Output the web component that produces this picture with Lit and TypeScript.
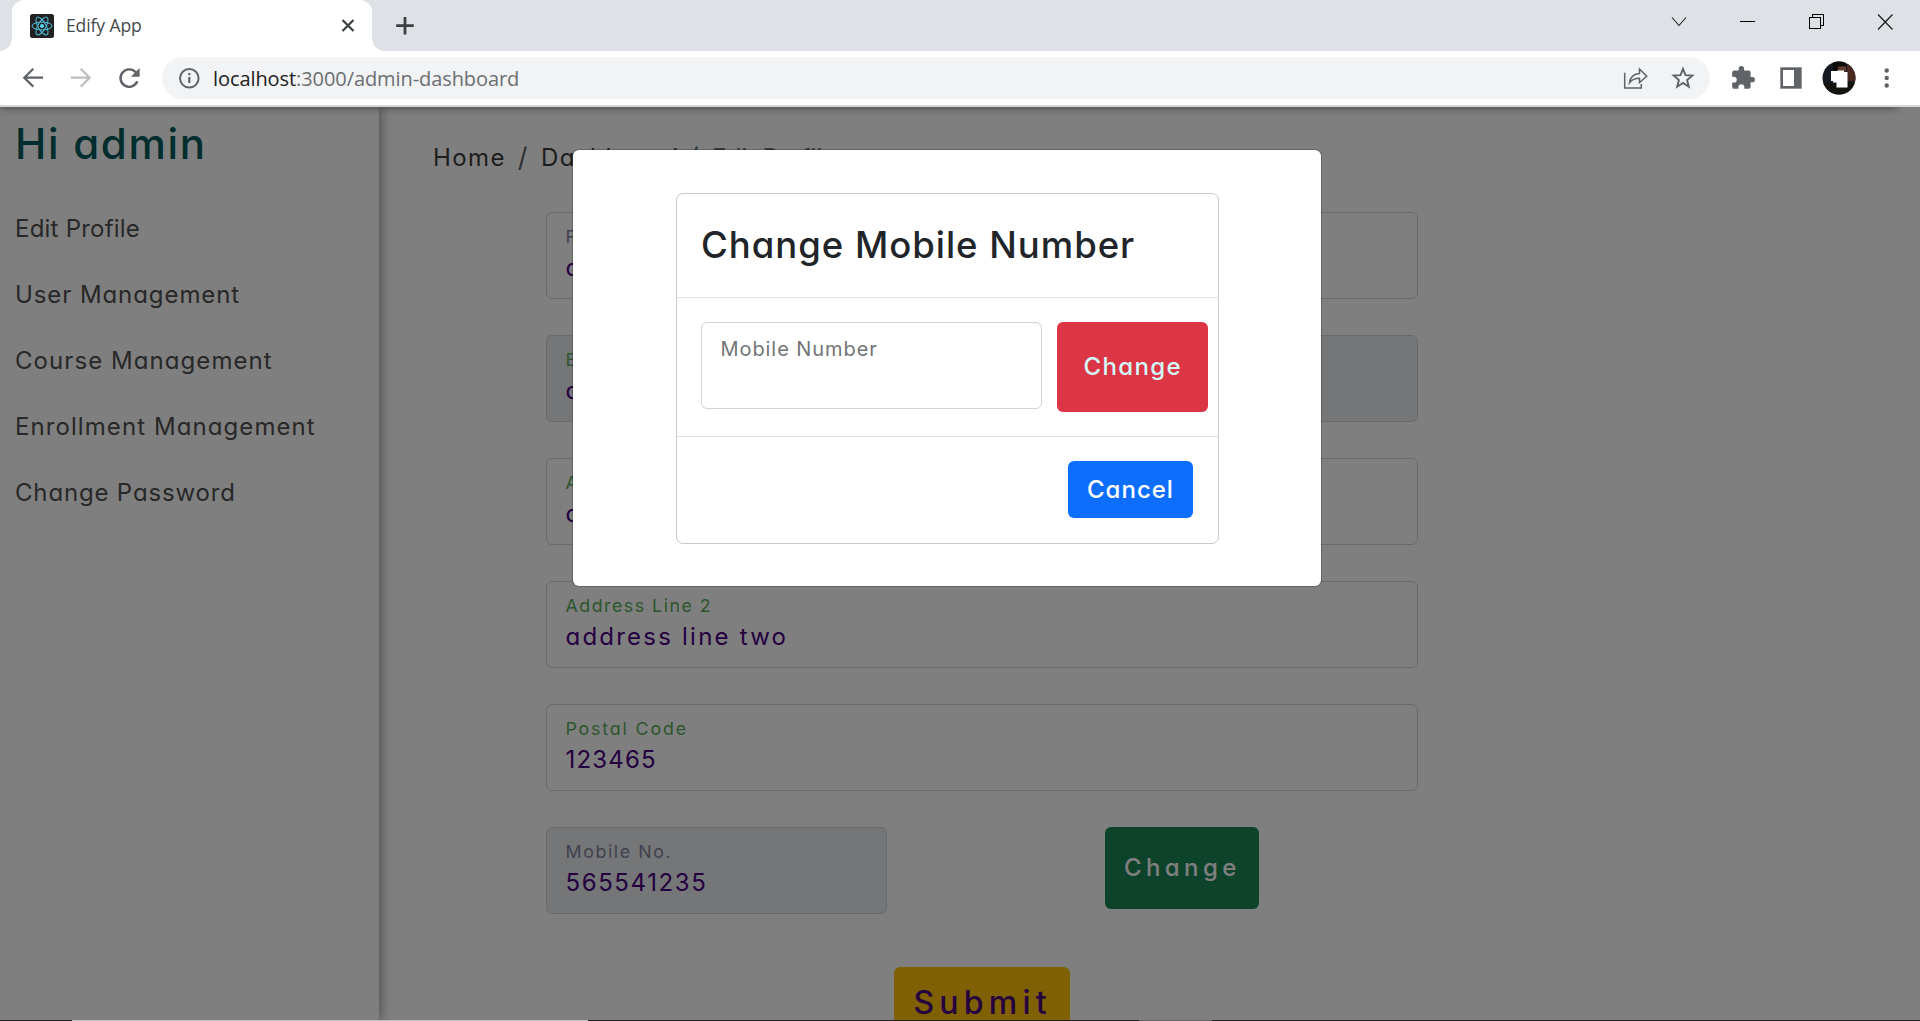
import { LitElement, html, css } from "lit";
import { customElement } from "lit/decorators.js";

const spaced = (text: string, ls: number) =>
  html`<span style="letter-spacing:${ls}px">${text}</span>`;

@customElement("browser-chrome")
class BrowserChrome extends LitElement {
  static styles = css`
    :host { display: block; height: 107px; box-sizing: border-box; background: #fff; border-bottom: 2px solid #d6d7d8; font-family: "Open Sans", "Noto Sans", sans-serif; }
    svg { display: block; flex: none; }
    .strip { display: flex; height: 51px; background: #dee1e6; padding-left: 12px; }
    .tab { position: relative; width: 360px; box-sizing: border-box; background: #fff; border-radius: 12px 12px 0 0; display: flex; align-items: center; padding: 1px 12px 0 18px; }
    .tab::before, .tab::after { content: ""; position: absolute; bottom: 0; width: 12px; height: 12px; }
    .tab::before { left: -12px; background: radial-gradient(circle at 0 0, #dee1e6 11.5px, #fff 12px); }
    .tab::after { right: -12px; background: radial-gradient(circle at 100% 0, #dee1e6 11.5px, #fff 12px); }
    .title { flex: 1; margin-left: 12px; padding-bottom: 2px; font-size: 17.5px; line-height: 24px; letter-spacing: -0.1px; color: #45494d; }
    .plus { margin: 14px 0 0 21px; }
    .win { display: flex; margin-left: auto; height: 43px; align-items: center; }
    .win svg { width: 69px; }
    .bar { display: flex; height: 54px; align-items: center; padding-left: 21px; }
    .nav { display: flex; gap: 24px; }
    .omni { width: 1548px; height: 42px; margin-left: 21px; box-sizing: border-box; border-radius: 21px; background: #f1f3f4; display: flex; align-items: center; padding: 0 3px 0 15px; }
    .url { flex: 1; margin-left: 11px; padding-top: 1px; font-size: 20px; line-height: 30px; letter-spacing: -0.08px; color: #6b6f73; }
    .host { color: #202124; }
    .cell { width: 48px; display: flex; justify-content: center; }
    .tools { display: flex; margin-left: 9px; align-items: center; }
  `;
  render() {
    return html`
      <div class="strip">
        <div class="tab">
          <svg width="24" height="24" viewBox="0 0 24 24" fill="none" stroke="#53c1de">
            <rect width="24" height="24" rx="2.5" fill="#222" stroke="none" />
            <ellipse cx="12" cy="12" rx="10" ry="3.9" />
            <ellipse cx="12" cy="12" rx="10" ry="3.9" transform="rotate(60 12 12)" />
            <ellipse cx="12" cy="12" rx="10" ry="3.9" transform="rotate(120 12 12)" />
            <circle cx="12" cy="12" r="2" fill="#61dafb" stroke="none" />
          </svg>
          <span class="title">Edify App</span>
          <svg width="24" height="24" viewBox="0 0 24 24"><path d="M6.500 6l11 11M17.500 6l-11 11" stroke="#3c4043" stroke-width="2.2" /></svg>
        </div>
        <svg class="plus" width="24" height="24" viewBox="0 0 24 24"><path d="M12 3v17.500M3.200 11.700h17.600" stroke="#3c4043" stroke-width="2.8" /></svg>
        <div class="win">
          <svg height="16" viewBox="0 0 69 16" fill="none" stroke="#222" stroke-width="1.1"><path d="M28 3.500l7 8 7-8" /></svg>
          <svg height="16" viewBox="0 0 69 16"><path d="M27 7.500h15" stroke="#000" /></svg>
          <svg height="17" viewBox="0 0 69 17" fill="none" stroke="#000" shape-rendering="crispEdges"><path d="M27.500 4.500h11v11h-11zM30.500 4.500v-3h11v11h-3" /></svg>
          <svg height="16" viewBox="0 0 69 16"><path d="M27 .5l14.500 15M41.500 .5l-14.500 15" stroke="#111" stroke-width="1.1" /></svg>
        </div>
      </div>
      <div class="bar">
        <div class="nav">
          <svg width="24" height="24" viewBox="0 0 24 24" fill="none" stroke="#5f6368" stroke-width="2.2"><path d="M22 11.700H3.800M12.300 2.800L3.300 11.700l9 8.900" /></svg>
          <svg width="24" height="24" viewBox="0 0 24 24" fill="none" stroke="#bcbec0" stroke-width="2.2"><path d="M2 11.700h18.200M11.700 2.800l9 8.900-9 8.900" /></svg>
          <svg width="24" height="24" viewBox="0 0 24 24"><path d="M20.300 15.300A8.700 8.700 0 1 1 18.600 6.200" fill="none" stroke="#5f6368" stroke-width="2.4" /><path d="M22.600 2v8.700h-8.700z" fill="#5f6368" /></svg>
        </div>
        <div class="omni">
          <svg width="25" height="24" viewBox="0 0 25 24"><circle cx="12.300" cy="12.300" r="9.300" fill="none" stroke="#5f6368" stroke-width="2" /><path d="M12.300 11v6M12.300 7v2.200" stroke="#5f6368" stroke-width="2.200" /></svg>
          <span class="url"><span class="host">localhost</span>:3000/admin-dashboard</span>
          <div class="cell">
            <svg width="26" height="26" viewBox="0 0 26 26" fill="none" stroke="#5f6368" stroke-width="1.500"><path d="M2.700 7.800v15.300h16.600v-4" /><path d="M7.500 17.800c.8-5.700 4.200-9 10-9.300V4l7.200 7.200-7.200 6.400v-4.300c-4.400-.1-7.500 1.300-10 4.500z" stroke-linejoin="miter" /></svg>
          </div>
          <div class="cell">
            <svg width="26" height="26" viewBox="0 0 26 26"><path d="M13 3.800l2.500 6.300 6.900.5-5.300 4.400 1.700 6.700-5.800-3.700-5.800 3.700 1.700-6.700-5.300-4.400 6.900-.5z" fill="none" stroke="#5f6368" stroke-width="1.900" /></svg>
          </div>
        </div>
        <div class="tools">
          <div class="cell"><svg width="26" height="26" viewBox="0 0 24 24"><path fill="#5f6368" d="M20.500 11H19V7a2 2 0 0 0-2-2h-4V3.500a2.500 2.500 0 0 0-5 0V5H4a2 2 0 0 0-2 2v3.800h1.500a2.700 2.700 0 0 1 0 5.400H2V20a2 2 0 0 0 2 2h3.800v-1.500a2.700 2.700 0 0 1 5.400 0V22H17a2 2 0 0 0 2-2v-4h1.500a2.500 2.500 0 0 0 0-5z" /></svg></div>
          <div class="cell"><svg width="24" height="24" viewBox="0 0 24 24"><path d="M1.500 1.500h21v21h-21z" fill="#5f6368" /><path d="M4 4h11v16H4z" fill="#fff" /><path d="M1.500 1.500h21v21h-21z" fill="none" stroke="#93969a" /></svg></div>
          <div class="cell"><svg width="34" height="34" viewBox="0 0 34 34">
            <defs><clipPath id="c"><circle cx="17" cy="17" r="16.500" /></clipPath></defs>
            <g clip-path="url(#c)"><path fill="#151922" d="M0 0h34v34H0z" /><path fill="#4a2a20" d="M25 4h9v16h-9z" /><path fill="#0d0b0b" d="M11 0h13v11H11z" /><path fill="#5f4030" d="M16 5.500h8v5h-8z" /><path fill="#15130d" d="M0 22h34v12H0z" /></g>
            <path fill="#fff" d="M9 10h6V9.500h7V11h3.500v15.500H14.500V21.500H11V20H9z" />
          </svg></div>
          <div class="cell"><svg width="24" height="24" viewBox="0 0 24 24" fill="#5f6368"><circle cx="11.700" cy="4.500" r="2.200" /><circle cx="11.700" cy="12" r="2.200" /><circle cx="11.700" cy="19.500" r="2.200" /></svg></div>
        </div>
      </div>`;
  }
}

const menu: [string, number][] = [
  ["Edit Profile", 0.22], ["User Management", 0.92], ["Course Management", 1.07],
  ["Enrollment Management", 1.08], ["Change Password", 0.83],
];

interface Field { label: string; ls: number; value: string; vs: number; kind: string }
const fields: Field[] = [
  { label: "First Name", ls: 1.5, value: "admin", vs: 2.2, kind: "plain" },
  { label: "Email", ls: 1.5, value: "admin@gmail.com", vs: 2.2, kind: "valid disabled" },
  { label: "Address Line 1", ls: 1.5, value: "address line one", vs: 2.22, kind: "valid" },
  { label: "Address Line 2", ls: 1.5, value: "address line two", vs: 2.22, kind: "valid" },
  { label: "Postal Code", ls: 1.85, value: "123465", vs: 1.2, kind: "valid" },
];
const mobile: Field = { label: "Mobile No.", ls: 1.6, value: "565541235", vs: 1.6, kind: "disabled" };

@customElement("app-root")
class AppRoot extends LitElement {
  static styles = css`
    :host { display: block; width: 1920px; height: 1021px; overflow: hidden; background: #fff; font-family: Inter, "Open Sans", sans-serif; font-feature-settings: "cv11"; color: #212529; }
    span { white-space: pre; }
    .page { position: relative; height: 913px; overflow: hidden; display: flex; }
    .side { width: 379px; box-sizing: border-box; padding-left: 15px; box-shadow: 0 0 12px rgba(0,0,0,.5); }
    .hi { height: 72px; line-height: 73px; font-size: 42px; font-weight: 450; color: #005a5a; margin-bottom: 17px; }
    .item { height: 66px; line-height: 66px; font-size: 24px; font-weight: 430; color: #505050; }
    .main { flex: 1; }
    .crumbs { height: 101px; margin-left: 54px; display: grid; grid-template-columns: 72px 36px 135px 36px auto; align-items: center; font-size: 24px; font-weight: 430; color: #3c3c3c; }
    .sep { font-size: 27px; color: #5c656d; text-align: center; padding-right: 1px; }
    .current { color: #6c757d; }
    .form { width: 872px; margin: 4px 0 0 167px; display: flex; flex-direction: column; gap: 36px; }
    .field { height: 87px; box-sizing: border-box; border: 1px solid #ced4da; border-radius: 6px; padding: 10px 18.500px; }
    .disabled { background: #e9ecef; }
    .label { font-size: 17.8px; line-height: 27px; color: #85829e; }
    .valid .label { color: #5aac5a; }
    .value { font-size: 24px; line-height: 36px; font-weight: 430; color: #4b0082; }
    .row { display: flex; }
    .row .field { width: 341px; }
    .btn { border-radius: 6px; display: flex; align-items: center; box-sizing: border-box; font-size: 24px; font-weight: 500; }
    .green { width: 154px; height: 82px; margin-left: 218px; padding: 0 0 1px 19px; background: #198754; color: #fff; }
    .submit { align-self: center; margin-top: 17px; width: 176px; height: 70px; padding-left: 19.5px; background: #ffc107; color: #4b0082; font-size: 32px; flex: none; }
    .overlay { position: absolute; inset: 0; background: rgba(0,0,0,.5); display: flex; align-items: flex-start; padding: 42px 0 0 572px; }
    .shade { position: absolute; left: 0; right: 23px; top: -6px; height: 6px; box-shadow: 0 0 8px rgba(0,0,0,.6); }
    .modal { width: 750px; height: 438px; box-sizing: border-box; border: 1px solid rgba(0,0,0,.2); background: #fff; background-clip: padding-box; border-radius: 7px; padding: 43px 102px 43px 103px; }
    .card { height: 351px; box-sizing: border-box; border: 1px solid #c8c9ca; border-radius: 7px; }
    .head { height: 104px; box-sizing: border-box; border-bottom: 1px solid #dee2e6; padding: 0 24px 2px; display: flex; align-items: center; font-size: 36.500px; font-weight: 480; }
    .body { display: flex; gap: 15px; align-items: flex-start; height: 138px; box-sizing: border-box; padding: 24px; }
    .input { width: 341px; height: 87px; flex: none; box-sizing: border-box; border: 1px solid #ced4da; border-radius: 6px; padding: 12px 18.500px; font-size: 20px; line-height: 28px; color: #727476; }
    .red { width: 151px; height: 90px; flex: none; background: #dc3545; color: #d4fcf8; padding: 0 0 1px 26.500px; font-weight: 540; }
    .foot { border-top: 1px solid #dee2e6; padding: 24px 25px 24px 24px; display: flex; justify-content: flex-end; }
    .blue { width: 125px; height: 57px; padding-left: 19px; background: #0d6efd; color: #fff; font-weight: 540; }
    .task { display: flex; height: 1px; background: #222; }
    .lit { margin-left: 72px; width: 516px; background: #bfbfbf; }
    .dim { margin-left: 551px; width: 73px; background: #666; }
  `;
  field(f: Field) {
    return html`<div class="field ${f.kind}">
      <div class="label">${spaced(f.label, f.ls)}</div>
      <div class="value">${spaced(f.value, f.vs)}</div>
    </div>`;
  }
  render() {
    return html`
      <browser-chrome></browser-chrome>
      <div class="page">
        <nav class="side">
          <div class="hi">${spaced("Hi admin", 1.7)}</div>
          ${menu.map(([t, ls]) => html`<div class="item">${spaced(t, ls)}</div>`)}
        </nav>
        <div class="main">
          <div class="crumbs">
            ${spaced("Home", 1.4)}<span class="sep">/</span>${spaced("Dashboard", 1.4)}<span class="sep">/</span><div class="current">${spaced("Edit Profile", 0.2)}</div>
          </div>
          <div class="form">
            ${fields.map((f) => this.field(f))}
            <div class="row">${this.field(mobile)}<div class="btn green">${spaced("Change", 4.4)}</div></div>
            <div class="btn submit">${spaced("Submit", 5.2)}</div>
          </div>
        </div>
        <div class="overlay">
          <div class="shade"></div>
          <div class="modal">
            <div class="card">
              <div class="head">${spaced("Change Mobile Number", 0.98)}</div>
              <div class="body">
                <div class="input">${spaced("Mobile Number", 0.93)}</div>
                <div class="btn red">${spaced("Change", 1.35)}</div>
              </div>
              <div class="foot"><div class="btn blue">${spaced("Cancel", 1)}</div></div>
            </div>
          </div>
        </div>
      </div>
      <div class="task"><div class="lit"></div><div class="dim"></div></div>`;
  }
}
